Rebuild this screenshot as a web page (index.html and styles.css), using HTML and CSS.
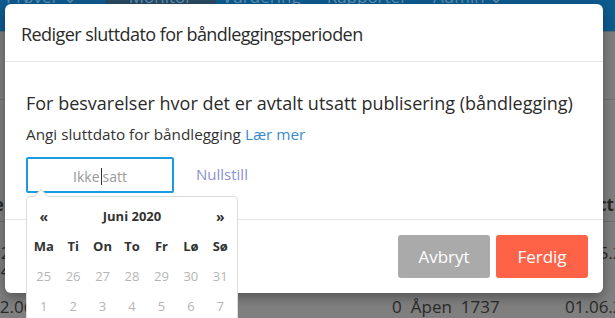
FILE: index.html
```html
<!DOCTYPE html>
<html lang="no">
<head>
    <meta charset="UTF-8">
    <meta name="viewport" content="width=device-width, initial-scale=1.0">
    <title>Rediger sluttdato</title>
    <link rel="stylesheet" href="styles.css">
</head>
<body>
    <div class="page">
        <nav class="topnav">
            <span class="nav-item">Prøver ⌄</span>
            <span class="nav-item active">Monitor</span>
            <span class="nav-item">Vurdering</span>
            <span class="nav-item">Rapporter</span>
            <span class="nav-item">Admin ⌄</span>
        </nav>

        <div class="content">
            <div class="rule"></div>
            <div class="thead">
                <span class="th-left">Sentre</span>
                <span class="th-right">Acti</span>
            </div>
            <div class="trow">
                <span class="cell-left">02.<br>04.</span>
                <span class="cell-right">01.05.2020</span>
            </div>
            <div class="trow last">
                <span class="cell-left">02.06</span>
                <span class="cell-mid">0</span>
                <span class="cell-state">Åpen</span>
                <span class="cell-num">1737</span>
                <span class="cell-right">01.06.2020</span>
            </div>
        </div>
    </div>

    <div class="modal">
        <div class="modal-header">
            <h2>Rediger sluttdato for båndleggingsperioden</h2>
        </div>

        <div class="modal-body">
            <p class="lead">For besvarelser hvor det er avtalt utsatt publisering (båndlegging)</p>
            <p class="hint">Angi sluttdato for båndlegging <a href="#">Lær mer</a></p>
            <div class="date-row">
                <div class="date-input">Ikke<span class="caret"></span>satt</div>
                <a href="#" class="reset-link">Nullstill</a>
            </div>
        </div>

        <div class="modal-footer">
            <button class="btn btn-cancel">Avbryt</button>
            <button class="btn btn-done">Ferdig</button>
        </div>
    </div>

    <div class="datepicker">
        <div class="dp-grid">
            <span class="dp-nav">«</span>
            <span class="dp-title">Juni 2020</span>
            <span class="dp-nav">»</span>

            <span class="dp-day">Ma</span>
            <span class="dp-day">Ti</span>
            <span class="dp-day">On</span>
            <span class="dp-day">To</span>
            <span class="dp-day">Fr</span>
            <span class="dp-day">Lø</span>
            <span class="dp-day">Sø</span>

            <span class="dp-date">25</span>
            <span class="dp-date">26</span>
            <span class="dp-date">27</span>
            <span class="dp-date">28</span>
            <span class="dp-date">29</span>
            <span class="dp-date">30</span>
            <span class="dp-date">31</span>

            <span class="dp-date">1</span>
            <span class="dp-date">2</span>
            <span class="dp-date">3</span>
            <span class="dp-date">4</span>
            <span class="dp-date">5</span>
            <span class="dp-date">6</span>
            <span class="dp-date">7</span>
        </div>
    </div>
</body>
</html>
```

FILE: styles.css
```css
* {
    margin: 0;
    padding: 0;
    box-sizing: border-box;
}

html, body {
    height: 100%;
    overflow: hidden;
}

body {
    font-family: "Open Sans", "Liberation Sans", Arial, sans-serif;
    background: #7f7f7f;
    color: #333;
}

/* page behind the backdrop (already dimmed) */

.topnav {
    height: 32px;
    background: #0e5b8f;
    display: flex;
    align-items: flex-start;
    border-bottom: 1px solid #5f6d78;
}

.nav-item {
    font-size: 17px;
    color: #5f8fb3;
    line-height: 20px;
    margin-top: -13px;
    padding: 0 20px 16px 6px;
}

.nav-item.active {
    background: #284a64;
    padding: 0 24px 16px 24px;
    margin-left: 8px;
}

.content {
    color: #2a2a2a;
    font-size: 17px;
}

.rule {
    height: 1px;
    background: #6f6f6f;
    margin-top: 67px;
}

.thead {
    display: flex;
    justify-content: space-between;
    font-weight: bold;
    margin-top: 93px;
    padding-bottom: 5px;
    border-bottom: 1px solid #6e6e6e;
}

.th-left {
    margin-left: -52px;
}

.th-right {
    margin-right: -4px;
}

.trow {
    display: flex;
    align-items: flex-start;
    line-height: 18px;
    padding-top: 22px;
}

.cell-left {
    margin-left: -9px;
    width: 60px;
}

.cell-right {
    width: 90px;
    margin-left: auto;
    margin-right: -40px;
}

.trow.last {
    padding-top: 17px;
    line-height: 20px;
}

.trow.last .cell-left {
    margin-left: -10px;
}

.cell-mid {
    margin-left: 342px;
}

.cell-state {
    margin-left: 9px;
}

.cell-num {
    margin-left: 9px;
}

/* modal dialog */

.modal {
    position: absolute;
    left: 5px;
    top: 4px;
    width: 598px;
    height: 289px;
    background: white;
    border-radius: 6px;
    box-shadow: 0 4px 12px rgba(0, 0, 0, 0.35);
    display: flex;
    flex-direction: column;
}

.modal-header {
    height: 58px;
    padding: 17px 16px 0;
    border-bottom: 1px solid #e5e5e5;
}

.modal-header h2 {
    font-size: 18px;
    font-weight: normal;
    letter-spacing: -0.55px;
    color: #2b2b2b;
    line-height: 26px;
}

.modal-body {
    height: 158px;
    padding: 29px 21px 0;
    border-bottom: 1px solid #e5e5e5;
}

.lead {
    font-size: 18px;
    line-height: 24px;
    color: #2b2b2b;
}

.hint {
    font-size: 15.3px;
    line-height: 20px;
    margin-top: 9px;
    color: #333;
}

.hint a {
    color: #3a8bcd;
    text-decoration: none;
}

.date-row {
    display: flex;
    align-items: center;
    gap: 22px;
    margin-top: 13px;
}

.date-input {
    width: 148px;
    height: 36px;
    border: 2px solid #1a9be1;
    border-radius: 2px;
    font-size: 14px;
    color: #999;
    display: flex;
    align-items: center;
    justify-content: center;
    padding-top: 2px;
}

.caret {
    display: inline-block;
    width: 1px;
    height: 17px;
    background: #333;
    margin: 0 1px;
}

.reset-link {
    font-size: 15px;
    color: #8b8fd6;
    text-decoration: none;
    margin-top: -2px;
}

.modal-footer {
    flex: 1;
    display: flex;
    justify-content: flex-end;
    align-items: flex-start;
    gap: 6px;
    padding: 15px 15px 0;
}

.btn {
    width: 92px;
    height: 43px;
    border: none;
    border-radius: 3px;
    color: white;
    font-family: inherit;
    font-size: 17px;
}

.btn-cancel {
    background: #aaaaaa;
}

.btn-done {
    background: #ff6347;
}

/* datepicker dropdown */

.datepicker {
    position: absolute;
    left: 26px;
    top: 196px;
    width: 212px;
    height: 140px;
    background: white;
    border: 1px solid #dcdcdc;
    border-radius: 4px;
    padding: 4px 2px 0;
}

.datepicker::before {
    content: "";
    position: absolute;
    left: 9px;
    top: -6px;
    width: 9px;
    height: 9px;
    background: white;
    border-left: 1px solid #dcdcdc;
    border-top: 1px solid #dcdcdc;
    transform: rotate(45deg);
}

.dp-grid {
    display: grid;
    grid-template-columns: repeat(7, 1fr);
    grid-auto-rows: 30px;
    align-items: center;
    text-align: center;
    font-size: 13px;
}

.dp-nav {
    font-weight: bold;
    font-size: 14px;
    color: #333;
}

.dp-title {
    grid-column: span 5;
    font-weight: bold;
    color: #333;
}

.dp-day {
    font-weight: bold;
    color: #333;
}

.dp-date {
    color: #b5b5b5;
}
```
